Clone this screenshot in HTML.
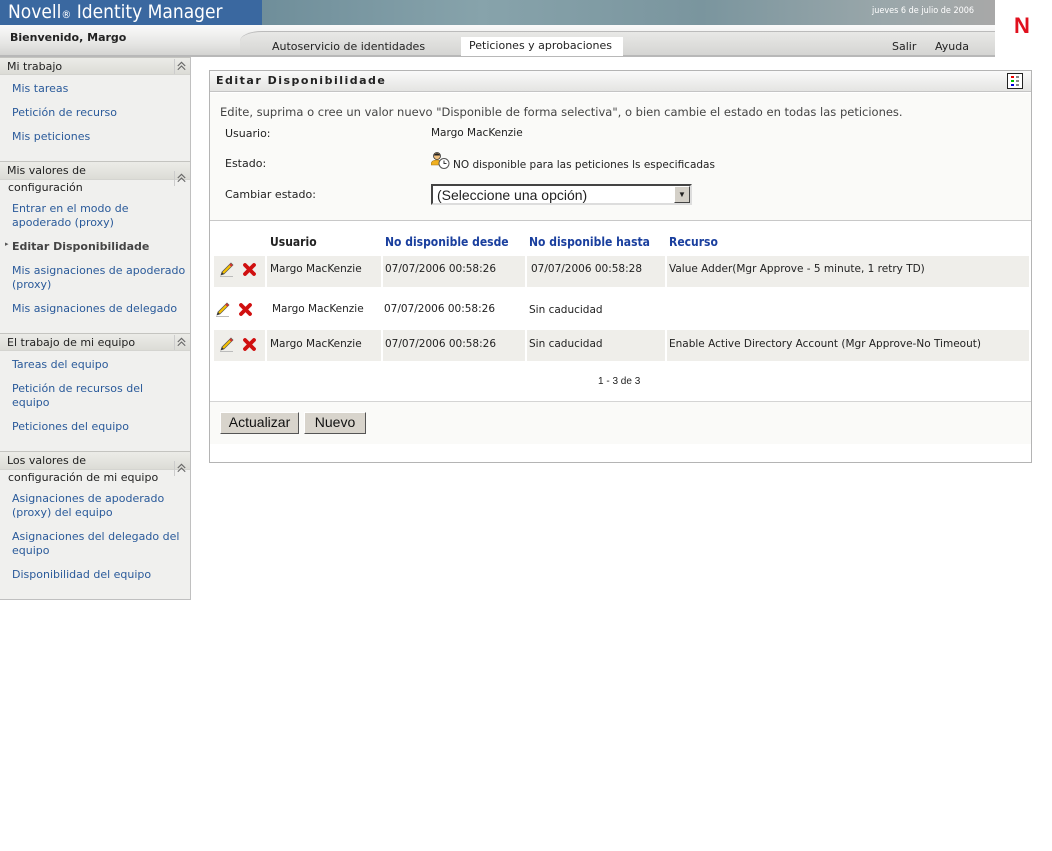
<!DOCTYPE html>
<html><head><meta charset="utf-8"><style>
*{margin:0;padding:0;box-sizing:border-box}
body{width:1052px;height:851px;background:#fff;font-family:"DejaVu Sans","Liberation Sans",sans-serif;font-size:11px;color:#222;position:relative;overflow:hidden}
.a{position:absolute;white-space:nowrap}
.lk{color:#2a5a9a;font-size:11px}
.sh{position:absolute;left:0;width:190px;height:18px;background:linear-gradient(#ecece8,#dcdcd6);border-top:1px solid #c4c4c0;border-bottom:1px solid #d4d4d0;font-size:11px;color:#222;padding:2px 0 0 7px}
.chev{position:absolute;right:2px;top:1px;width:14px;height:15px;border-left:1px solid #ccc}
.hd{font-family:"DejaVu Sans Condensed","DejaVu Sans",sans-serif;font-weight:bold;font-size:12px}
.btn{position:absolute;height:22px;background:#d8d4cc;border:1px solid;border-color:#fff #555 #555 #fff;font-family:"Liberation Sans",sans-serif;font-size:14px;text-align:center;line-height:19px;color:#111}
</style></head><body>
<svg width="0" height="0" style="position:absolute"><defs>
<g id="ch"><path d="M3 7L7 3L11 7M3 11L7 7L11 11" fill="none" stroke="#666" stroke-width="1.2"/></g>
<g id="pe"><path d="M2 14L3 11L12 2L14 4L5 13Z" fill="#f5c000" stroke="#555" stroke-width=".7"/><path d="M2 14L3 11L5 13Z" fill="#333"/><path d="M11 3L13 5" stroke="#d03030" stroke-width="2"/><path d="M1 15.5H14" stroke="#bbb"/></g>
<g id="xx"><path d="M3 3L12 12M12 3L3 12" stroke="#d01010" stroke-width="3.8" stroke-linecap="round"/></g></defs></svg>
<!-- header -->
<div class="a" style="left:0;top:0;width:262px;height:25px;background:#3a68a0"></div>
<div class="a" style="left:8px;top:1px;color:#fff;font-size:19px;font-family:'DejaVu Sans Condensed','DejaVu Sans',sans-serif">Novell<span style="font-size:11px">®</span> Identity Manager</div>
<div class="a" style="left:262px;top:0;width:733px;height:25px;background:linear-gradient(90deg,#6f8e9a,#87a3ab 30%,#7a959e 60%,#9aa7aa 85%,#a8a8a8)"></div>
<div class="a" style="left:872px;top:6px;color:#fff;font-size:9px;font-family:'DejaVu Sans Condensed',sans-serif">jueves 6 de julio de 2006</div>
<div class="a" style="left:995px;top:0;width:57px;height:56px;background:#fff"></div>
<div class="a" style="left:1014px;top:13px;color:#e0101e;font-size:22px;font-weight:bold;font-family:'Liberation Sans',sans-serif">N</div>
<div class="a" style="left:0;top:25px;width:995px;height:31px;background:linear-gradient(#fafafa,#e6e6e4 60%,#d2d2d0)"></div>
<div class="a" style="left:240px;top:31px;width:755px;height:25px;background:linear-gradient(#e8e8e6,#d4d4d2);border-top:1px solid #bbb;border-top-left-radius:22px 10px"></div>
<div class="a" style="left:0;top:55px;width:995px;height:2px;background:#b8b8b8"></div>
<div class="a" style="left:10px;top:31px;font-weight:bold;font-size:11px">Bienvenido, Margo</div>
<div class="a" style="left:272px;top:40px">Autoservicio de identidades</div>
<div class="a" style="left:461px;top:37px;width:162px;height:19px;background:#fff"></div>
<div class="a" style="left:469px;top:39px">Peticiones y aprobaciones</div>
<div class="a" style="left:892px;top:40px">Salir</div>
<div class="a" style="left:935px;top:40px">Ayuda</div>
<!-- sidebar -->
<div class="a" style="left:0;top:57px;width:191px;height:543px;background:#f0f0ee;border-right:1px solid #c0c0c0;border-bottom:1px solid #c0c0c0"></div>
<div class="sh" style="top:57px">Mi trabajo<svg class="chev" viewBox="0 0 14 15"><use href="#ch"/></svg></div>
<div class="a lk" style="left:12px;top:82px">Mis tareas</div>
<div class="a lk" style="left:12px;top:106px">Petición de recurso</div>
<div class="a lk" style="left:12px;top:130px">Mis peticiones</div>
<div class="sh" style="top:161px;height:19px">Mis valores de<svg class="chev" style="top:9px" viewBox="0 0 14 15"><use href="#ch"/></svg></div>
<div class="a" style="left:8px;top:181px">configuración</div>
<div class="a lk" style="left:12px;top:202px;line-height:14px">Entrar en el modo de<br>apoderado (proxy)</div>
<div class="a" style="left:5px;top:240px;font-size:7px;color:#555">▸</div>
<div class="a" style="left:12px;top:240px;font-weight:bold;color:#444">Editar Disponibilidade</div>
<div class="a lk" style="left:12px;top:264px;line-height:14px">Mis asignaciones de apoderado<br>(proxy)</div>
<div class="a lk" style="left:12px;top:302px">Mis asignaciones de delegado</div>
<div class="sh" style="top:333px">El trabajo de mi equipo<svg class="chev" viewBox="0 0 14 15"><use href="#ch"/></svg></div>
<div class="a lk" style="left:12px;top:358px">Tareas del equipo</div>
<div class="a lk" style="left:12px;top:382px;line-height:14px">Petición de recursos del<br>equipo</div>
<div class="a lk" style="left:12px;top:420px">Peticiones del equipo</div>
<div class="sh" style="top:451px;height:19px">Los valores de<svg class="chev" style="top:9px" viewBox="0 0 14 15"><use href="#ch"/></svg></div>
<div class="a" style="left:8px;top:471px">configuración de mi equipo</div>
<div class="a lk" style="left:12px;top:492px;line-height:14px">Asignaciones de apoderado<br>(proxy) del equipo</div>
<div class="a lk" style="left:12px;top:530px;line-height:14px">Asignaciones del delegado del<br>equipo</div>
<div class="a lk" style="left:12px;top:568px">Disponibilidad del equipo</div>
<!-- panel -->
<div class="a" style="left:209px;top:70px;width:823px;height:393px;border:1px solid #b4b4b4;background:#fff"></div>
<div class="a" style="left:210px;top:71px;width:821px;height:21px;background:linear-gradient(#fafafa,#e4e4e2);border-bottom:1px solid #c4c4c4"></div>
<div class="a" style="left:216px;top:74px;font-weight:bold;letter-spacing:1.5px;font-size:11px">Editar Disponibilidade</div>
<div class="a" style="left:1007px;top:73px;width:16px;height:16px;border:1px solid #222;background:#fff">
<svg width="14" height="14" viewBox="0 0 14 14"><rect x="3" y="2" width="3" height="2" fill="#e00"/><rect x="3" y="6" width="3" height="2" fill="#0b0"/><rect x="3" y="10" width="3" height="2" fill="#00d"/><rect x="8" y="2" width="3" height="2" fill="#888"/><rect x="8" y="6" width="3" height="2" fill="#888"/><rect x="8" y="10" width="3" height="2" fill="#888"/></svg></div>
<div class="a" style="left:210px;top:93px;width:821px;height:128px;background:#fafaf8;border-bottom:1px solid #c8c8c8"></div>
<div class="a" style="left:220px;top:105px;color:#444;font-size:11.5px">Edite, suprima o cree un valor nuevo "Disponible de forma selectiva", o bien cambie el estado en todas las peticiones.</div>
<div class="a" style="left:225px;top:127px">Usuario:</div>
<div class="a" style="left:431px;top:127px;font-size:10.5px">Margo MacKenzie</div>
<div class="a" style="left:225px;top:157px">Estado:</div>
<svg class="a" style="left:431px;top:152px" width="19" height="17" viewBox="0 0 19 17"><circle cx="6" cy="4" r="3.5" fill="#f0c080" stroke="#333" stroke-width=".8"/><path d="M2.5 3.5Q6-1 9.5 3.5" fill="#222"/><path d="M0 13Q0 8 6 8Q11 8 11 13Z" fill="#f0b020" stroke="#a07010" stroke-width=".6"/><circle cx="13" cy="11.5" r="5" fill="#fff" stroke="#555"/><path d="M13 8.5V11.5H15.5" stroke="#333" fill="none"/></svg>
<div class="a" style="left:453px;top:159px;font-size:10.5px">NO disponible para las peticiones ls especificadas</div>
<div class="a" style="left:225px;top:188px">Cambiar estado:</div>
<div class="a" style="left:431px;top:184px;width:261px;height:21px;border:2px solid;border-color:#444 #ddd #ddd #444;background:#fff;font-family:'Liberation Sans',sans-serif;font-size:14px;padding:1px 0 0 4px">(Seleccione una opción)<div style="position:absolute;right:0;top:0;width:16px;height:17px;background:#d4d0c8;border:1px solid;border-color:#fff #444 #444 #fff;font-size:8px;text-align:center;line-height:15px">▼</div></div>
<!-- table -->
<div class="a hd" style="left:270px;top:235px">Usuario</div>
<div class="a hd" style="left:385px;top:235px;color:#1a3f9e">No disponible desde</div>
<div class="a hd" style="left:529px;top:235px;color:#1a3f9e">No disponible hasta</div>
<div class="a hd" style="left:669px;top:235px;color:#1a3f9e">Recurso</div>
<div class="a" style="left:214px;top:256px;width:815px;height:31px;background:#efeeea"></div>
<div class="a" style="left:214px;top:330px;width:815px;height:31px;background:#efeeea"></div>
<div class="a" style="left:265px;top:256px;width:2px;height:31px;background:#fff"></div><div class="a" style="left:381px;top:256px;width:2px;height:31px;background:#fff"></div><div class="a" style="left:525px;top:256px;width:2px;height:31px;background:#fff"></div><div class="a" style="left:665px;top:256px;width:2px;height:31px;background:#fff"></div>
<div class="a" style="left:265px;top:330px;width:2px;height:31px;background:#fff"></div><div class="a" style="left:381px;top:330px;width:2px;height:31px;background:#fff"></div><div class="a" style="left:525px;top:330px;width:2px;height:31px;background:#fff"></div><div class="a" style="left:665px;top:330px;width:2px;height:31px;background:#fff"></div>
<svg class="a" style="left:219px;top:261px" width="16" height="16"><use href="#pe"/></svg><svg class="a" style="left:242px;top:262px" width="15" height="15"><use href="#xx"/></svg>
<svg class="a" style="left:215px;top:301px" width="16" height="16"><use href="#pe"/></svg><svg class="a" style="left:238px;top:302px" width="15" height="15"><use href="#xx"/></svg>
<svg class="a" style="left:219px;top:336px" width="16" height="16"><use href="#pe"/></svg><svg class="a" style="left:242px;top:337px" width="15" height="15"><use href="#xx"/></svg>
<div class="a" style="left:270px;top:263px;font-size:10.5px">Margo MacKenzie</div>
<div class="a" style="left:385px;top:263px;font-size:10.5px">07/07/2006 00:58:26</div>
<div class="a" style="left:531px;top:263px;font-size:10.5px">07/07/2006 00:58:28</div>
<div class="a" style="left:669px;top:263px;font-size:10.5px">Value Adder(Mgr Approve - 5 minute, 1 retry TD)</div>
<div class="a" style="left:272px;top:303px;font-size:10.5px">Margo MacKenzie</div>
<div class="a" style="left:384px;top:303px;font-size:10.5px">07/07/2006 00:58:26</div>
<div class="a" style="left:529px;top:304px;font-size:10.5px">Sin caducidad</div>
<div class="a" style="left:270px;top:338px;font-size:10.5px">Margo MacKenzie</div>
<div class="a" style="left:385px;top:338px;font-size:10.5px">07/07/2006 00:58:26</div>
<div class="a" style="left:529px;top:338px;font-size:10.5px">Sin caducidad</div>
<div class="a" style="left:669px;top:338px;font-size:10.5px">Enable Active Directory Account (Mgr Approve-No Timeout)</div>
<div class="a" style="left:598px;top:376px;font-size:10px;font-family:'Liberation Sans',sans-serif">1 - 3 de 3</div>
<div class="a" style="left:210px;top:401px;width:821px;height:43px;background:#fafaf8;border-top:1px solid #d4d4d4"></div>
<div class="btn" style="left:220px;top:412px;width:79px">Actualizar</div>
<div class="btn" style="left:304px;top:412px;width:62px">Nuevo</div>
</body></html>
